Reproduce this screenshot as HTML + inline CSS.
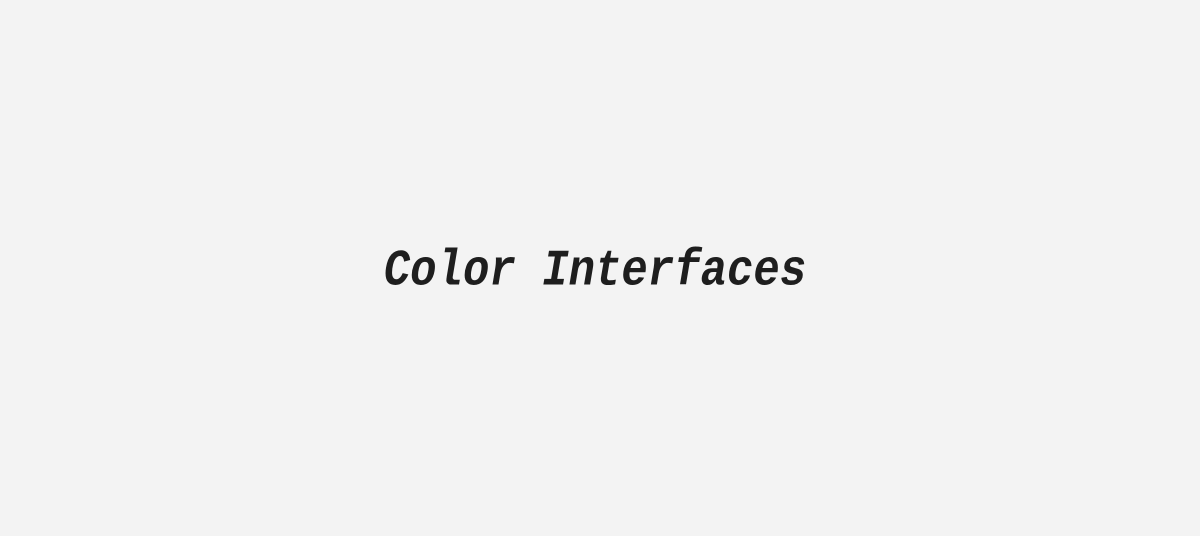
<!DOCTYPE html>
<html><head><style>
html,body{margin:0;padding:0;background:#f3f3f3;width:1200px;height:536px;overflow:hidden}
.t{position:absolute;left:380px;top:246px;width:430px;text-align:center;font-family:"Liberation Mono",monospace;font-weight:bold;font-style:italic;font-size:44px;line-height:52px;color:#1e1e1e;white-space:pre;transform:scaleY(1.15);transform-origin:50% 50%}
</style></head><body>
<div class="t">Color Interfaces</div>
</body></html>
